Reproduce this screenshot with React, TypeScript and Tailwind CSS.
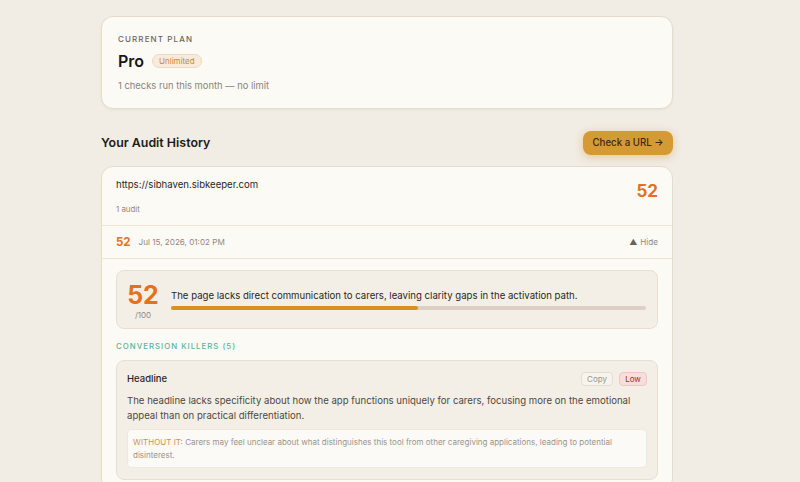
export default function App() {
  const score = 52;
  return (
    <div
      className="min-h-screen bg-[#f1ece4] pt-4 pb-10"
      style={{ fontFamily: "Inter, 'Noto Sans', sans-serif" }}
    >
      <div className="ml-[101px] w-[572px]">
        <div className="rounded-xl border border-[#e4dccf] bg-[#fcfaf5] px-4 pt-4 pb-[15px] shadow-[0_1px_2px_rgba(120,100,70,0.08)]">
          <p className="text-[8px] leading-[12px] font-medium uppercase tracking-[0.14em] text-[#6b645c]">
            Current plan
          </p>
          <div className="mt-[5px] flex h-[22px] items-center gap-[8px]">
            <span className="text-[16px] font-semibold text-[#1a1714]">Pro</span>
            <span className="rounded-full border border-[#f0d9be] bg-[#f8ebdc] px-[6px] text-[8px] leading-[12px] text-[#c98a43]">
              Unlimited
            </span>
          </div>
          <p className="mt-[7px] text-[9.4px] leading-[14px] text-[#8a837b]">
            1 checks run this month — no limit
          </p>
        </div>

        <div className="mt-[22px] flex items-center justify-between">
          <h2 className="text-[12.4px] font-semibold text-[#1f1b17]">Your Audit History</h2>
          <button className="h-[24px] w-[90px] rounded-lg bg-[#d69a35] text-[9.7px] font-medium text-[#3a2a14] shadow-[0_2px_8px_rgba(214,154,53,0.45)]">
            Check a URL →
          </button>
        </div>

        <div className="mt-[11px] rounded-xl border border-[#e4dccf] bg-[#fcfaf5]">
          <div className="flex items-start justify-between px-[14px] pt-[11px] pb-[10px]">
            <div>
              <p className="text-[9.6px] leading-[14px] text-[#2a2622]">https://sibhaven.sibkeeper.com</p>
              <p className="mt-[11px] text-[7.9px] leading-[12px] text-[#8f8880]">1 audit</p>
            </div>
            <span className="mt-[1px] text-[17px] leading-[24px] font-bold text-[#e8701c]">{score}</span>
          </div>
          <div className="flex h-[33px] items-center justify-between border-t border-[#ece5da] px-[14px] pt-[1px]">
            <div className="flex items-center gap-[8px]">
              <span className="text-[11.5px] font-bold text-[#e8701c]">{score}</span>
              <span className="text-[8.1px] text-[#8f8880]">Jul 15, 2026, 01:02 PM</span>
            </div>
            <span className="text-[8.1px] text-[#8f8880]">
              <span className="mr-[3px] text-[#6a625a]">▲</span>Hide
            </span>
          </div>
          <div className="border-t border-[#ece5da] px-[14px] pt-[11px] pb-[10px]">
            <div className="flex h-[59px] items-center gap-[12px] rounded-lg border border-[#e7dfd2] bg-[#f4efe6] pl-[10px] pr-[11px]">
              <div className="flex w-[32px] flex-col items-center pt-[3px]">
                <span className="text-[25px] font-bold leading-none text-[#e8701c]">{score}</span>
                <span className="mt-[2px] text-[8px] leading-[10px] text-[#8f8880]">/100</span>
              </div>
              <div className="flex-1">
                <p className="text-[9.6px] leading-[14px] text-[#2a2622]">
                  The page lacks direct communication to carers, leaving clarity gaps in the activation path.
                </p>
                <div className="mt-[3px] h-[4px] w-full rounded-full bg-[#ddd0c5]">
                  <div className="h-full rounded-full bg-[#d8911e]" style={{ width: `${score}%` }} />
                </div>
              </div>
            </div>

            <p className="mt-[11px] text-[7.8px] leading-[12px] font-medium uppercase tracking-[0.13em] text-[#55b59c]">
              Conversion killers (5)
            </p>

            <div className="mt-2 rounded-lg border border-[#e7dfd2] bg-[#f4efe6] px-[10px] pt-[11px] pb-[11px]">
              <div className="flex h-[14px] items-center justify-between">
                <span className="text-[9.5px] font-medium text-[#2a2622]">Headline</span>
                <div className="flex items-center gap-[6px]">
                  <span className="flex h-[14px] w-[32px] items-center justify-center rounded border border-[#e4ddd2] bg-[#f8f4ed] text-[8px] text-[#9a938b]">
                    Copy
                  </span>
                  <span className="flex h-[14px] w-[28px] items-center justify-center rounded border border-[#f0c6c4] bg-[#f7dedb] text-[8px] text-[#9b2f2f]">
                    Low
                  </span>
                </div>
              </div>
              <p className="mt-[7px] text-[9.6px] leading-[15px] text-[#4d4741]">
                The headline lacks specificity about how the app functions uniquely for carers, focusing more on the emotional appeal than on practical differentiation.
              </p>
              <div className="mt-[6px] rounded border border-[#eee8de] bg-[#fcfaf6] px-[5px] py-[6px] text-[8px] leading-[12.5px] text-[#9a938b]">
                <span className="text-[#d98e4a]">WITHOUT IT:</span> Carers may feel unclear about what distinguishes this tool from other caregiving applications, leading to potential disinterest.
              </div>
            </div>
          </div>
        </div>
      </div>
    </div>
  );
}
